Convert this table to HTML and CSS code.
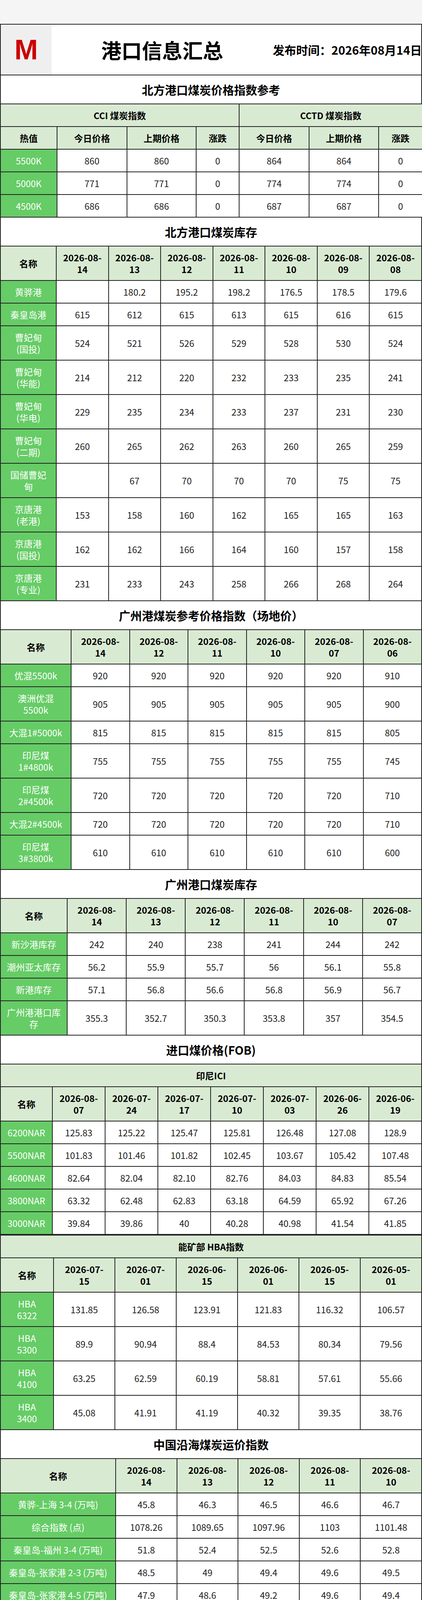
FILE: index.html
```html
<!DOCTYPE html>
<html lang="zh-CN">
<head>
<meta charset="utf-8">
<title>港口信息汇总</title>
<link rel="stylesheet" href="styles.css">
</head>
<body>
<div class="page">
  <div class="top">
    <div class="logo"><span class="logo-m">M</span></div>
    <div class="top-title">港口信息汇总</div>
    <div class="top-date">发布时间：2026年08月14日</div>
  </div>

  <div class="sec-title">北方港口煤炭价格指数参考</div>
  <table class="grid">
    <colgroup><col style="width:145px"><col style="width:179px"><col style="width:177px"><col style="width:110px"><col style="width:179px"><col style="width:178px"><col style="width:112px"></colgroup>
    <tr><th colspan="4">CCI 煤炭指数</th><th colspan="3">CCTD 煤炭指数</th></tr>
    <tr><th>热值</th><th>今日价格</th><th>上期价格</th><th>涨跌</th><th>今日价格</th><th>上期价格</th><th>涨跌</th></tr>
    <tr><td class="nm">5500K</td><td>860</td><td>860</td><td>0</td><td>864</td><td>864</td><td>0</td></tr>
    <tr><td class="nm">5000K</td><td>771</td><td>771</td><td>0</td><td>774</td><td>774</td><td>0</td></tr>
    <tr><td class="nm">4500K</td><td>686</td><td>686</td><td>0</td><td>687</td><td>687</td><td>0</td></tr>
  </table>

  <div class="sec-title">北方港口煤炭库存</div>
  <table class="grid">
    <colgroup><col style="width:143px"><col><col><col><col><col><col><col></colgroup>
    <tr><th>名称</th><th>2026-08-<br>14</th><th>2026-08-<br>13</th><th>2026-08-<br>12</th><th>2026-08-<br>11</th><th>2026-08-<br>10</th><th>2026-08-<br>09</th><th>2026-08-<br>08</th></tr>
    <tr><td class="nm">黄骅港</td><td></td><td>180.2</td><td>195.2</td><td>198.2</td><td>176.5</td><td>178.5</td><td>179.6</td></tr>
    <tr><td class="nm">秦皇岛港</td><td>615</td><td>612</td><td>615</td><td>613</td><td>615</td><td>616</td><td>615</td></tr>
    <tr><td class="nm">曹妃甸<br>(国投)</td><td>524</td><td>521</td><td>526</td><td>529</td><td>528</td><td>530</td><td>524</td></tr>
    <tr><td class="nm">曹妃甸<br>(华能)</td><td>214</td><td>212</td><td>220</td><td>232</td><td>233</td><td>235</td><td>241</td></tr>
    <tr><td class="nm">曹妃甸<br>(华电)</td><td>229</td><td>235</td><td>234</td><td>233</td><td>237</td><td>231</td><td>230</td></tr>
    <tr><td class="nm">曹妃甸<br>(二期)</td><td>260</td><td>265</td><td>262</td><td>263</td><td>260</td><td>265</td><td>259</td></tr>
    <tr><td class="nm">国储曹妃<br>甸</td><td></td><td>67</td><td>70</td><td>70</td><td>70</td><td>75</td><td>75</td></tr>
    <tr><td class="nm">京唐港<br>(老港)</td><td>153</td><td>158</td><td>160</td><td>162</td><td>165</td><td>165</td><td>163</td></tr>
    <tr><td class="nm">京唐港<br>(国投)</td><td>162</td><td>162</td><td>166</td><td>164</td><td>160</td><td>157</td><td>158</td></tr>
    <tr><td class="nm">京唐港<br>(专业)</td><td>231</td><td>233</td><td>243</td><td>258</td><td>266</td><td>268</td><td>264</td></tr>
  </table>

  <div class="sec-title">广州港煤炭参考价格指数（场地价）</div>
  <table class="grid">
    <colgroup><col style="width:181px"><col><col><col><col><col><col></colgroup>
    <tr><th>名称</th><th>2026-08-<br>14</th><th>2026-08-<br>12</th><th>2026-08-<br>11</th><th>2026-08-<br>10</th><th>2026-08-<br>07</th><th>2026-08-<br>06</th></tr>
    <tr><td class="nm">优混5500k</td><td>920</td><td>920</td><td>920</td><td>920</td><td>920</td><td>910</td></tr>
    <tr><td class="nm">澳洲优混<br>5500k</td><td>905</td><td>905</td><td>905</td><td>905</td><td>905</td><td>900</td></tr>
    <tr><td class="nm">大混1#5000k</td><td>815</td><td>815</td><td>815</td><td>815</td><td>815</td><td>805</td></tr>
    <tr><td class="nm">印尼煤<br>1#4800k</td><td>755</td><td>755</td><td>755</td><td>755</td><td>755</td><td>745</td></tr>
    <tr><td class="nm">印尼煤<br>2#4500k</td><td>720</td><td>720</td><td>720</td><td>720</td><td>720</td><td>710</td></tr>
    <tr><td class="nm">大混2#4500k</td><td>720</td><td>720</td><td>720</td><td>720</td><td>720</td><td>710</td></tr>
    <tr><td class="nm">印尼煤<br>3#3800k</td><td>610</td><td>610</td><td>610</td><td>610</td><td>610</td><td>600</td></tr>
  </table>

  <div class="sec-title">广州港口煤炭库存</div>
  <table class="grid">
    <colgroup><col style="width:171px"><col><col><col><col><col><col></colgroup>
    <tr><th>名称</th><th>2026-08-<br>14</th><th>2026-08-<br>13</th><th>2026-08-<br>12</th><th>2026-08-<br>11</th><th>2026-08-<br>10</th><th>2026-08-<br>07</th></tr>
    <tr><td class="nm">新沙港库存</td><td>242</td><td>240</td><td>238</td><td>241</td><td>244</td><td>242</td></tr>
    <tr><td class="nm">潮州亚太库存</td><td>56.2</td><td>55.9</td><td>55.7</td><td>56</td><td>56.1</td><td>55.8</td></tr>
    <tr><td class="nm">新港库存</td><td>57.1</td><td>56.8</td><td>56.6</td><td>56.8</td><td>56.9</td><td>56.7</td></tr>
    <tr><td class="nm">广州港港口库<br>存</td><td>355.3</td><td>352.7</td><td>350.3</td><td>353.8</td><td>357</td><td>354.5</td></tr>
  </table>

  <div class="sec-title">进口煤价格(FOB)</div>
  <table class="grid">
    <colgroup><col style="width:133px"><col><col><col><col><col><col><col></colgroup>
    <tr><th colspan="8">印尼ICI</th></tr>
    <tr><th>名称</th><th>2026-08-<br>07</th><th>2026-07-<br>24</th><th>2026-07-<br>17</th><th>2026-07-<br>10</th><th>2026-07-<br>03</th><th>2026-06-<br>26</th><th>2026-06-<br>19</th></tr>
    <tr><td class="nm">6200NAR</td><td>125.83</td><td>125.22</td><td>125.47</td><td>125.81</td><td>126.48</td><td>127.08</td><td>128.9</td></tr>
    <tr><td class="nm">5500NAR</td><td>101.83</td><td>101.46</td><td>101.82</td><td>102.45</td><td>103.67</td><td>105.42</td><td>107.48</td></tr>
    <tr><td class="nm">4600NAR</td><td>82.64</td><td>82.04</td><td>82.10</td><td>82.76</td><td>84.03</td><td>84.83</td><td>85.54</td></tr>
    <tr><td class="nm">3800NAR</td><td>63.32</td><td>62.48</td><td>62.83</td><td>63.18</td><td>64.59</td><td>65.92</td><td>67.26</td></tr>
    <tr><td class="nm">3000NAR</td><td>39.84</td><td>39.86</td><td>40</td><td>40.28</td><td>40.98</td><td>41.54</td><td>41.85</td></tr>
  </table>
  <table class="grid">
    <colgroup><col style="width:136px"><col><col><col><col><col><col></colgroup>
    <tr><th colspan="7">能矿部 HBA指数</th></tr>
    <tr><th>名称</th><th>2026-07-<br>15</th><th>2026-07-<br>01</th><th>2026-06-<br>15</th><th>2026-06-<br>01</th><th>2026-05-<br>15</th><th>2026-05-<br>01</th></tr>
    <tr><td class="nm">HBA<br>6322</td><td>131.85</td><td>126.58</td><td>123.91</td><td>121.83</td><td>116.32</td><td>106.57</td></tr>
    <tr><td class="nm">HBA<br>5300</td><td>89.9</td><td>90.94</td><td>88.4</td><td>84.53</td><td>80.34</td><td>79.56</td></tr>
    <tr><td class="nm">HBA<br>4100</td><td>63.25</td><td>62.59</td><td>60.19</td><td>58.81</td><td>57.61</td><td>55.66</td></tr>
    <tr><td class="nm">HBA<br>3400</td><td>45.08</td><td>41.91</td><td>41.19</td><td>40.32</td><td>39.35</td><td>38.76</td></tr>
  </table>

  <div class="sec-title">中国沿海煤炭运价指数</div>
  <table class="grid">
    <colgroup><col style="width:295px"><col><col><col><col><col></colgroup>
    <tr><th>名称</th><th>2026-08-<br>14</th><th>2026-08-<br>13</th><th>2026-08-<br>12</th><th>2026-08-<br>11</th><th>2026-08-<br>10</th></tr>
    <tr><td class="nm">黄骅-上海 3-4 (万吨)</td><td>45.8</td><td>46.3</td><td>46.5</td><td>46.6</td><td>46.7</td></tr>
    <tr><td class="nm">综合指数 (点)</td><td>1078.26</td><td>1089.65</td><td>1097.96</td><td>1103</td><td>1101.48</td></tr>
    <tr><td class="nm">秦皇岛-福州 3-4 (万吨)</td><td>51.8</td><td>52.4</td><td>52.5</td><td>52.6</td><td>52.8</td></tr>
    <tr><td class="nm">秦皇岛-张家港 2-3 (万吨)</td><td>48.5</td><td>49</td><td>49.4</td><td>49.6</td><td>49.5</td></tr>
    <tr><td class="nm">秦皇岛-张家港 4-5 (万吨)</td><td>47.9</td><td>48.6</td><td>49.2</td><td>49.6</td><td>49.4</td></tr>
    <tr><td class="nm">秦皇岛-广州 5-6 (万吨)</td><td>56.6</td><td>56.8</td><td>57</td><td>57</td><td>56.9</td></tr>
    <tr><td class="nm">秦皇岛-广州 6-7 (万吨)</td><td>50.7</td><td>50.9</td><td>51.3</td><td>51.4</td><td>51.2</td></tr>
    <tr><td class="nm">秦皇岛-宁波 1.5-2(万吨)</td><td>56.8</td><td>57.4</td><td>57.9</td><td>57.9</td><td>57.8</td></tr>
    <tr><td class="nm">秦皇岛-厦门 5-6 (万吨)</td><td>52.3</td><td>52.4</td><td>52.5</td><td>52.7</td><td>52.7</td></tr>
    <tr><td class="nm">秦皇岛-南京 3-4(万吨)</td><td>53.5</td><td>54.0</td><td>54.3</td><td>54.6</td><td>54.8</td></tr>
    <tr><td class="nm">秦皇岛-上海 4-5 (万吨)</td><td>45.8</td><td>46.5</td><td>46.9</td><td>47.2</td><td>47.1</td></tr>
    <tr><td class="nm">天津-镇江 1-1.5 (万吨)</td><td>66.5</td><td>67.3</td><td>67.6</td><td>67.8</td><td>67.6</td></tr>
    <tr><td class="nm">天津-镇江 2-3 (万吨)</td><td>50.0</td><td>50.6</td><td>50.9</td><td>51.0</td><td>51.1</td></tr>
    <tr><td class="nm">天津-上海 2-3 (万吨)</td><td>47.0</td><td>47.6</td><td>48.0</td><td>48.4</td><td>48.3</td></tr>
    <tr><td class="nm">京唐/曹妃甸-宁波 4-5(万<br>吨)</td><td>47.2</td><td>47.8</td><td>48.2</td><td>48.6</td><td>48.4</td></tr>
  </table>

  <div class="sec-title shift">中国长江煤炭运输运价(元/吨)、指数<span class="source">数据来源：上海航运交易所</span></div>
  <table class="grid">
    <colgroup><col style="width:267px"><col><col><col><col><col></colgroup>
    <tr><th>名称</th><th class="one">2026-08-14</th><th class="one">2026-08-07</th><th class="one">2026-07-24</th><th class="one">2026-07-17</th><th class="one">2026-07-10</th></tr>
    <tr><td class="nm">镇江/南京-武汉</td><td>29.00</td><td>33.60</td><td>29.00</td><td>32.00</td><td>29.00</td></tr>
    <tr><td class="nm">镇江/南京-九江</td><td>21.95</td><td>23.01</td><td>21.95</td><td>24.78</td><td>21.95</td></tr>
    <tr><td class="nm">荆州-黄石</td><td>19.60</td><td>10.90</td><td>19.60</td><td>10.90</td><td>19.60</td></tr>
    <tr><td class="nm">荆州-九江</td><td>24.00</td><td>24.00</td><td>24.00</td><td>24.00</td><td>24.00</td></tr>
    <tr><td class="nm">综合运价指数</td><td>1006.73</td><td>967.75</td><td>1086.17</td><td>1187.50</td><td>1118. 12</td></tr>
    <tr><td class="nm">张家港/江阴/太仓-岳阳</td><td>34.54</td><td>31.28</td><td>34.54</td><td>35.31</td><td>34.54</td></tr>
    <tr><td class="nm">张家港/江阴/太仓-九江</td><td>21.81</td><td>19.99</td><td>21.81</td><td>23.08</td><td>21.81</td></tr>
    <tr><td class="nm">张家港/江阴-黄石</td><td>20.50</td><td>22.20</td><td>20.50</td><td>27.65</td><td>20.50</td></tr>
    <tr><td class="nm">张家港/江阴-铜陵</td><td>15.25</td><td>16.43</td><td>15.25</td><td>20.75</td><td>15.25</td></tr>
    <tr><td class="nm">张家港/江阴-武汉</td><td>28.33</td><td>25.33</td><td>28.33</td><td>29.04</td><td>28.33</td></tr>
    <tr><td class="nm">张家港/太仓-重庆</td><td>61.50</td><td>61.00</td><td>61.50</td><td>61.50</td><td>61.50</td></tr>
    <tr><td class="nm">张家港/太仓-荆州</td><td>42.53</td><td>38.92</td><td>42.53</td><td>44.08</td><td>42.53</td></tr>
    <tr><td class="nm">张家港/太仓-芜湖</td><td>15.80</td><td>16.50</td><td>15.80</td><td>17.80</td><td>15.80</td></tr>
  </table>

  <div class="sec-title shift">六大电厂库存<span class="source">数据来源：武汉航运交易所</span></div>
  <table class="grid">
    <colgroup><col style="width:120px"><col><col><col><col><col><col></colgroup>
    <tr><th>名称</th><th>2026-08-<br>14</th><th>2026-08-<br>13</th><th>2026-08-<br>12</th><th>2026-08-<br>11</th><th>2026-08-<br>07</th><th>2026-08-<br>06</th></tr>
    <tr><td class="nm">库存</td><td>1408.3</td><td>1406.1</td><td>1400.7</td><td>1406.3</td><td>1418.5</td><td>1420.8</td></tr>
    <tr><td class="nm">日耗</td><td>92.68</td><td>96.55</td><td>96.98</td><td>93.83</td><td>95.01</td><td>94.04</td></tr>
    <tr><td class="nm">可用天<br>数</td><td>15.1</td><td>14.5</td><td>14.4</td><td>14.9</td><td>14.9</td><td>15</td></tr>
  </table>

  <div class="note">备注：以上价格仅供参考，来源于网络及贸易商搜集，具体执行价格以码头价格函为准！本公众号提供价格不作为最终价<br>格，任何以本公众号提供的数据、信息作出决策与公众号：煤炭数据一点通无关 风险自担。</div>
</div>
</body>
</html>
```

FILE: styles.css
```css
* {
  box-sizing: border-box;
}

html,
body {
  margin: 0;
  padding: 0;
  background: #f5f5f5;
}

body {
  font-family: "Noto Sans CJK SC", "Noto Sans", sans-serif;
  color: #1a1a1a;
}

.page {
  width: 1080px;
  margin: 61px 0 0;
  background: #ffffff;
}

/* ---------- top header ---------- */
.top {
  display: flex;
  height: 132px;
  border: 2px solid #222;
  background: #fff;
}

.logo {
  flex: 0 0 130px;
  background: #efefef;
  display: flex;
  align-items: center;
  justify-content: center;
}

.logo-m {
  font-family: "Liberation Sans", Arial, sans-serif;
  font-weight: 700;
  font-size: 72px;
  line-height: 1;
  color: #cc0000;
}

.top-title {
  flex: 0 0 566px;
  display: flex;
  align-items: center;
  justify-content: center;
  font-size: 52px;
  font-weight: 700;
  color: #000;
}

.top-date {
  flex: 1 1 auto;
  min-width: 0;
  display: flex;
  align-items: center;
  font-size: 30px;
  font-weight: 700;
  color: #000;
  white-space: nowrap;
  overflow: hidden;
}

/* ---------- section titles ---------- */
.sec-title {
  position: relative;
  height: 72px;
  border-left: 2px solid #222;
  border-right: 2px solid #222;
  display: flex;
  align-items: center;
  justify-content: center;
  font-size: 29.5px;
  font-weight: 700;
  color: #000;
  background: #fff;
}

.sec-title.shift {
  padding-right: 196px;
}

.source {
  position: absolute;
  top: 5px;
  right: 0;
  font-size: 16.5px;
  line-height: 22px;
  font-weight: 400;
  color: #444;
  white-space: nowrap;
}

/* ---------- tables ---------- */
.grid {
  width: 1080px;
  border-collapse: collapse;
  table-layout: fixed;
  background: #fff;
}

.grid th,
.grid td {
  border: 2px solid #222;
  padding: 13px 2px;
  line-height: 30px;
  font-size: 23px;
  text-align: center;
  vertical-align: middle;
}

.grid th {
  background: #d9ead3;
  font-weight: 700;
  color: #000;
}

.grid th.one {
  white-space: nowrap;
}

.grid td {
  color: #222;
}

.grid td.nm {
  background: #66cc66;
  color: #ffffff;
  white-space: nowrap;
}

/* ---------- footer note ---------- */
.note {
  background: #66cc66;
  color: #ffffff;
  font-size: 19.6px;
  line-height: 27px;
  padding: 1px 6px 2px;
  text-align: center;
  white-space: nowrap;
  border: 2px solid #222;
  border-top: 0;
}
```
